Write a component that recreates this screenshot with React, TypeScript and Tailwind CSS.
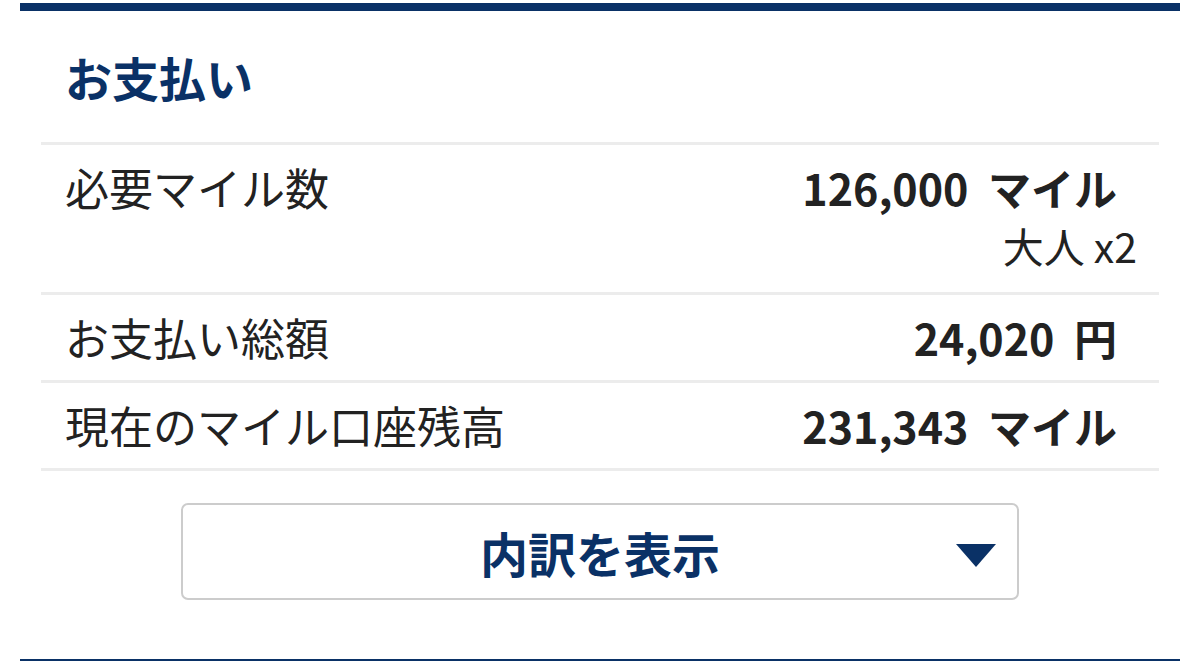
const rows = [
  { label: '必要マイル数', value: '126,000', unit: 'マイル', sub: '大人 x2' },
  { label: 'お支払い総額', value: '24,020', unit: '円' },
  { label: '現在のマイル口座残高', value: '231,343', unit: 'マイル' },
];

export default function App() {
  return (
    <div className="w-[1200px] h-[661px] bg-white pt-[3px] font-['Noto_Sans_CJK_JP',sans-serif] text-[#222]">
      <section className="mx-[20px] h-[658px] border-t-8 border-b-2 border-[#0a3166] px-[21px] flex flex-col">
        <div className="h-[131px] flex items-center pl-6">
          <h2 className="text-[47px] leading-none font-bold text-[#0a3166]">お支払い</h2>
        </div>
        {rows.map((row) => (
          <div key={row.label} className="border-t-[3px] border-[#ececec] flex justify-between pl-6 pr-[22px] pt-[13px] pb-[14px]">
            <span className="text-[44px] leading-[58px]">{row.label}</span>
            <div className="flex flex-col items-end">
              <span className="text-[43px] leading-[58px] font-bold mr-5 whitespace-pre">
                {row.value}  {row.unit}
              </span>
              {row.sub && <span className="text-[41px] leading-[58px] mb-1">{row.sub}</span>}
            </div>
          </div>
        ))}
        <div className="border-t-[3px] border-[#ececec] flex justify-center pt-[32px]">
          <button className="w-[838px] h-[97px] border-2 border-[#cccccc] rounded-[7px] bg-white flex items-center justify-center relative">
            <span className="text-[48px] font-bold text-[#0a3166] leading-none">内訳を表示</span>
            <svg className="absolute right-[21px] top-[39px]" width="40" height="23" viewBox="0 0 40 23">
              <polygon points="0,0 40,0 20,23" fill="#0a3166" />
            </svg>
          </button>
        </div>
      </section>
    </div>
  );
}
